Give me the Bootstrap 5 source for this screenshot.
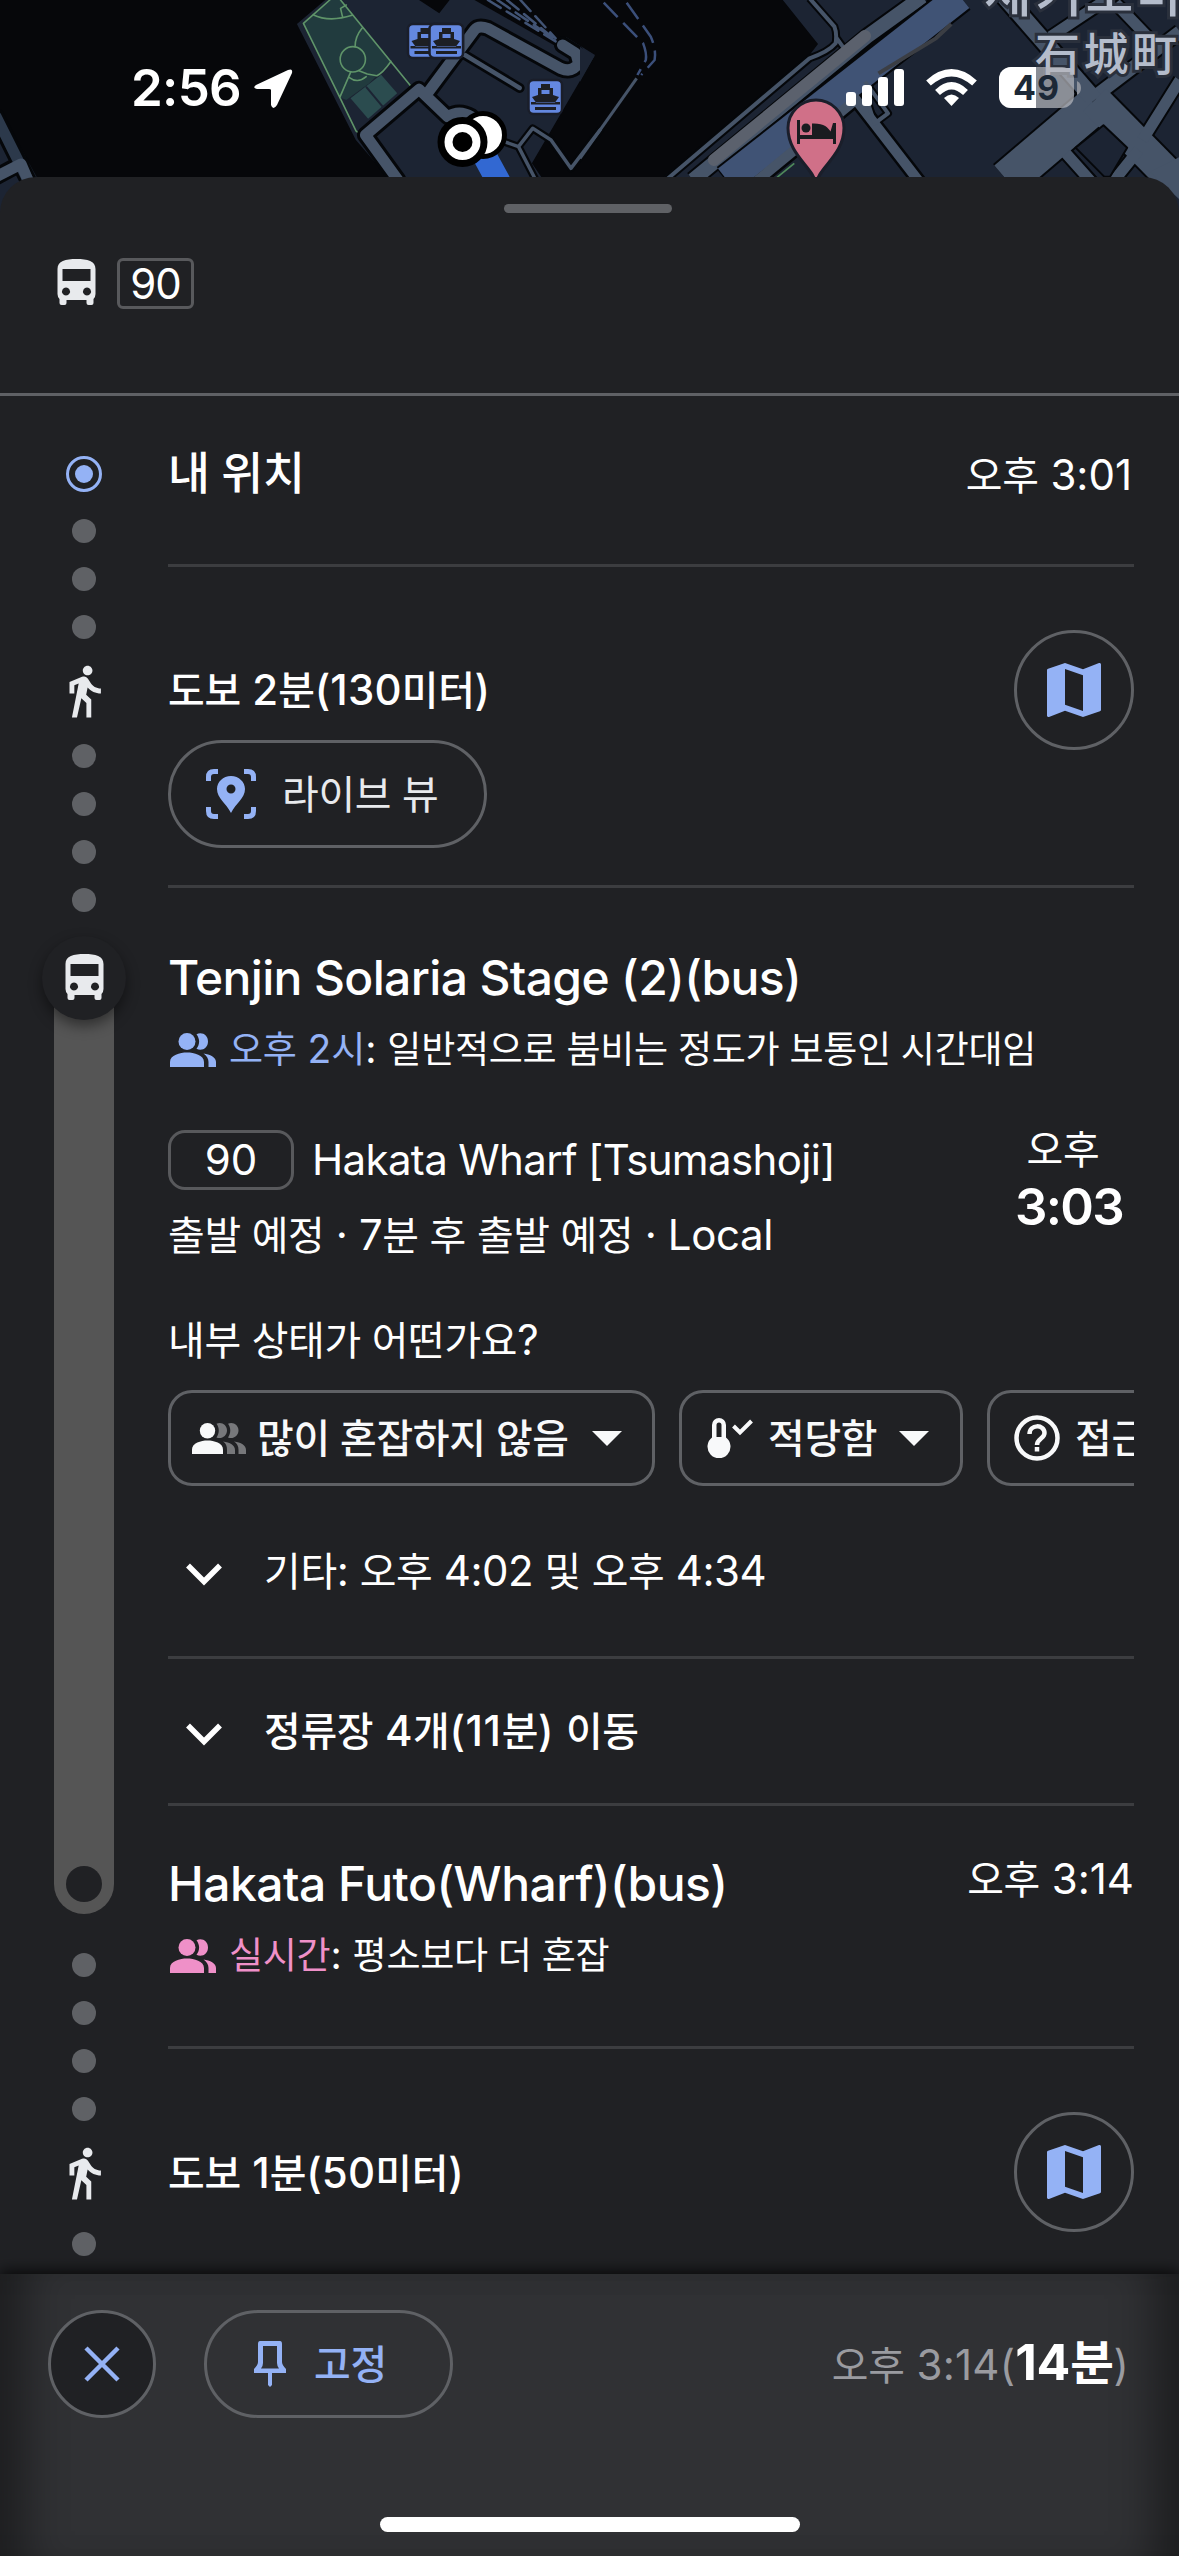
<!DOCTYPE html>
<html lang="ko" data-bs-theme="dark">
<head>
<meta charset="utf-8">
<meta name="viewport" content="width=device-width, initial-scale=1">
<title>경로</title>
<link rel="stylesheet" href="https://cdn.jsdelivr.net/npm/bootstrap@5.3.0/dist/css/bootstrap.min.css">
<style>
  :root { --sheet:#202124; --edge:#5f6165; --hair:#3c3d40; --sky:#94b2f5; --pink:#ef90c8; --soft:#e8eaed; }
  body { width:1179px; height:2556px; overflow:hidden; background:var(--sheet); color:#fff;
         font-family:Inter,"Noto Sans CJK KR",sans-serif; font-size:42px; line-height:60px; }
  svg { display:block; flex:none; }
  .ln { white-space:nowrap; }
  /* Hangul runs are set a little smaller than the Latin beside them */
  .ko { font-size:.95em; letter-spacing:-.008em; }
  .med { font-weight:500; }
  .map-area { height:217px; margin-bottom:-40px; background:#06070a; overflow:hidden; }
  .map-area svg .ns, .map-area svg .ns * { vector-effect:non-scaling-stroke; }
  .clock { font-size:51px; font-weight:600; left:131px; top:58px; letter-spacing:-.7px; }
  .loc-arrow { left:253px; top:68px; }
  .status-icons { left:846px; top:64px; }
  .sheet { background:var(--sheet); border-radius:36px 36px 0 0; }
  .sheet-head { height:219px; border-bottom:3px solid var(--edge); padding:27px 0 0; }
  .handle { width:168px; height:9px; border-radius:5px; background:var(--edge); margin-left:504px; }
  .head-route { padding:45px 0 0 57px; gap:21px; }
  .head-route svg { margin-bottom:4px; }
  .route-box { width:77px; height:51px; border:3px solid #58595c; border-radius:6px; letter-spacing:-.9px; }
  .rail { width:168px; }
  .rail-in { width:84px; margin-left:42px; }
  .dot { width:24px; height:24px; border-radius:50%; background:#5f6165; flex:none; }
  .stop-ring { width:36px; height:36px; border:3px solid var(--sky); border-radius:50%; margin-top:60px; }
  .stop-ring i { width:18px; height:18px; border-radius:50%; background:var(--sky); }
  .dots { gap:24px; }
  .dots-a { margin-top:27px; }
  .dots-b { margin-top:39px; }
  .walk-a { margin:23px 0 24px; }
  .walk-b { margin:23px 0 30px; }
  .bus-disc { width:84px; height:84px; margin-top:24px; padding-bottom:3px; background:var(--sheet); box-shadow:0 6px 14px rgba(0,0,0,.45); z-index:1; }
  .track { width:60px; height:936px; margin-top:-42px; background:#555; border-radius:0 0 30px 30px; padding-bottom:12px; }
  .track i { width:36px; height:36px; border-radius:50%; background:var(--sheet); }
  .leg { border-bottom:3px solid var(--hair); }
  .leg-start { height:171px; padding-top:47px; }
  .leg-walk { height:321px; padding-top:63px; }
  .leg-bus { height:771px; padding-top:60px; }
  .leg-stops { height:147px; padding:1px 0 0 18px; gap:42px; }
  .leg-end { height:243px; padding-top:48px; }
  .leg-last { height:225px; padding:63px 0 42px; }
  .main-col { width:966px; }
  .ttl { font-size:48px; font-weight:500; letter-spacing:-.65px; }
  .crowd { font-size:39px; gap:13px; padding-left:2px; margin-top:11px; }
  .dir { letter-spacing:-.64px; }
  .ring-btn { width:120px; height:120px; border:3px solid var(--edge); }
  .pill { border:3px solid var(--edge); border-radius:54px; height:108px; }
  .live { width:319px; margin-top:19px; padding-left:35px; gap:26px; color:var(--soft); }
  .line-box { width:126px; height:60px; border:3px solid #58595c; border-radius:17px; }
  .when { width:130px; margin-top:-10px; line-height:58px; }
  .when b { font-size:51px; font-weight:600; letter-spacing:-1.7px; margin-top:-1px; }
  .chips { gap:24px; margin-top:19px; }
  .chip { height:96px; border:3px solid var(--edge); border-radius:24px; color:#f8f9fa; font-weight:500; flex:none; }
  .chev { margin-top:5px; }
  .foot { height:282px; background:#303134; padding:36px 50px 0 48px;
          box-shadow:0 -3px 14px rgba(0,0,0,.75), inset 50px 0 40px -24px rgba(0,0,0,.38), inset -50px 0 40px -24px rgba(0,0,0,.38); }
  .close-btn { width:108px; height:108px; border:3px solid var(--edge); background:var(--sheet); }
  .pin { width:249px; margin-left:48px; padding-left:47px; gap:28px; color:var(--sky); font-weight:500; }
  .eta { color:#9a9ba0; letter-spacing:.2px; }
  .eta b { font-size:50px; font-weight:700; color:#fff; letter-spacing:-.2px; }
  .home-bar { width:420px; height:15px; border-radius:8px; background:#fff; margin:99px 0 0 332px; }
</style>
</head>
<body>
<div class="map-area position-relative">
<svg width="1179" height="217" viewBox="0 0 1179 217">
  <!-- harbour side -->
  <g class="ns" transform="scale(.38265 .33333)" stroke-linejoin="round" stroke-linecap="round">
    <path d="M0 330L100 540V700H0Z" fill="#1c2433"/>
    <path d="M-10 350L75 545M-10 530L55 490" stroke="#05070a" stroke-width="17" fill="none"/>
    <path d="M-10 350L75 545" stroke="#2c394b" stroke-width="11" fill="none"/>
    <path d="M-10 530L55 492L75 545" stroke="#465468" stroke-width="11" fill="none"/>
    <path d="M850 0L776 72L930 420L1020 540H1420L1390 490L1555 165L1480 112L1470 150L1240 0H1175L1148 40L1095 0Z" fill="#1c2433"/>
    <path d="M862 0L793 70L888 292L905 300L965 250L1022 184L890 0Z" fill="#213b3e"/>
    <path d="M916 295L996 224L1038 280L962 356Z" fill="#2b4c4f"/>
    <path d="M958 262L1000 320" stroke="#1c2433" stroke-width="2"/>
    <g fill="none" stroke="#5f9469" stroke-width="1.6"><path d="M862 0L793 70L888 292L930 392Q935 400 945 396M890 0L1075 260M818 44Q860 68 920 46M905 15L890 25L895 50M946 85Q928 110 928 140M1022 184Q1000 220 985 227L960 222L938 212M917 215L888 292M912 232Q935 252 957 230"/><ellipse cx="922" cy="178" rx="33" ry="38"/></g>
    <g fill="none" stroke="#05070a">
      <path stroke-width="17" d="M1040 540L955 405L1095 268L1170 350Q1200 328 1232 350M1120 275L1240 90Q1250 75 1275 85L1465 205Q1495 220 1512 190L1505 160L1470 135"/>
      <path stroke-width="10" d="M1215 165L1358 264"/><path stroke-width="8" d="M1280 410L1355 440L1400 540M1355 440L1392 385L1440 420L1492 505L1568 390"/></g>
    <g fill="none" stroke="#465468">
      <path stroke-width="11" d="M1040 540L955 405L1095 268L1170 350Q1200 328 1232 350M1120 275L1240 90Q1250 75 1275 85L1465 205Q1495 220 1512 190L1505 160L1470 135"/>
      <path stroke-width="4.5" d="M1215 165L1358 264"/><path stroke-width="3.5" d="M1280 410L1355 440L1400 540M1355 440L1392 385L1440 420L1492 505L1568 390"/></g>
    <path d="M1275 0L1452 124M1300 0L1440 110M1325 0L1452 120M1360 0L1452 115" stroke="#415374" stroke-width="2.5" stroke-dasharray="15 7" fill="none"/>
    <path d="M1265 465L1310 560" stroke="#3268d2" stroke-width="24"/>
  </g>
  <g id="ferry"><rect x="429.500" y="24" width="33.500" height="34" rx="5" fill="#6488e0" stroke="#1a1e2a" stroke-width="2.500"/><path d="M439 32H442V28H451V32H454V39L460 41L456 46.500H437L433 41L439 39ZM442.500 34V38H450.500V34ZM432 46H461V48.500H432ZM436 51H457V54H436Z" fill="#1d1f24" fill-rule="evenodd"/></g>
  <use href="#ferry" x="-21.500"/><use href="#ferry"/><use href="#ferry" x="99" y="56"/>
  <circle cx="483" cy="135" r="21.500" fill="#fff" stroke="#000" stroke-width="5"/>
  <circle cx="462.500" cy="142" r="21.500" fill="#fff" stroke="#000" stroke-width="7"/><circle cx="462.500" cy="142" r="10"/>
  <!-- town side -->
  <g class="ns" transform="translate(580) scale(.38265 .33333)" stroke-linejoin="round">
    <path d="M530 0L622 132L600 165L210 540V700H1568V0Z" fill="#1c2433"/>
    <path d="M0 475L148 235" stroke="#465468" stroke-width="3" fill="none"/><path d="M0 140L38 168L0 245Z" fill="#1c2433"/>
    <path d="M62 8L165 130Q175 160 172 180L150 225M122 8L185 110Q200 150 195 180L160 225" stroke="#3b4f7a" stroke-width="2.500" stroke-dasharray="20 8" fill="none"/>
    <g fill="none" stroke="#05070a"><path stroke-width="8" d="M600 -5L665 80Q672 100 668 130Q650 155 600 175L225 540M668 110L690 145"/>
      <path stroke-width="18" d="M295 540L750 110L895 -10"/><path stroke-width="34" d="M380 540L990 -10"/>
      <path stroke-width="15" d="M455 550L720 300M715 290L890 550"/><path stroke-width="8" d="M750 300L770 370L805 340L745 245"/>
      <path stroke-width="42" d="M1115 540L1345 315"/><path stroke-width="17" d="M1345 290L1568 95"/>
      <path stroke-width="21" d="M1110 -10L1345 300"/><path stroke-width="36" d="M1345 300L1568 560"/>
      <path stroke-width="15" d="M1270 460L1340 550M1460 450L1390 550M1568 240L1470 420M1400 10L1500 130M1230 110L1400 -20"/></g>
    <g fill="none" stroke="#465468"><path stroke-width="4" d="M600 -5L665 80Q672 100 668 130Q650 155 600 175L225 540M668 110L690 145"/>
      <path stroke-width="14" d="M295 540L750 110L895 -10"/></g>
    <path stroke="#5b616d" stroke-width="12" stroke-linecap="round" d="M350 480L745 108"/>
    <path stroke="#05070a" stroke-width="33" fill="none" d="M384 540L994 -10"/>
    <path stroke="#405375" stroke-width="29" fill="none" d="M384 540L994 -10"/>
    <path d="M970 72L930 115L780 220" stroke="#3b3e44" stroke-width="4" fill="none"/>
    <g fill="none" stroke="#465468"><path stroke-width="10" d="M455 550L720 300M715 290L890 550"/><path stroke-width="4" d="M750 300L770 370L805 340L745 245"/>
      <path stroke-width="38" d="M1115 540L1345 315"/><path stroke-width="13" d="M1345 290L1568 95"/>
      <path stroke-width="17" d="M1110 -10L1345 300"/><path stroke-width="32" d="M1345 300L1568 560"/>
      <path stroke-width="11" d="M1270 460L1340 550M1460 450L1390 550M1568 240L1470 420M1400 10L1500 130M1230 110L1400 -20"/></g>
    <path d="M1295 443L1368 376L1430 443L1385 530H1370Z" fill="#1c2433" stroke="#05070a" stroke-width="2"/>
    <path d="M1568 470L1490 515L1568 600Z" fill="#465468"/>
    <path d="M515 532L560 490" stroke="#4f8a5b" stroke-width="1.800"/>
  </g>
  <path d="M816 184C814 168 788 155 788 128a28 28 0 0 1 56 0C844 155 818 168 816 184Z" fill="#d07088" stroke="#1a1e2a" stroke-width="3"/>
  <path d="M797 120h3v15h12v-11.500c12-.5 16 4 18.500 8l2.500-8.500h3v21h-3v-5h-33v5h-3z" fill="#1a1c20"/><circle cx="806" cy="128" r="4.500" fill="#1a1c20"/>
  <g fill="#b4bccb" stroke="#2a303c" stroke-width="6" paint-order="stroke" font-family="'Noto Sans CJK KR',sans-serif" font-weight="500">
    <text x="984" y="12" font-size="52" textLength="200">세키조마</text>
    <text x="1035" y="71" font-size="45" textLength="142" font-family="'Noto Sans CJK JP',sans-serif">石城町</text></g>
</svg>
<div class="clock position-absolute ln">2:56</div>
<svg class="loc-arrow position-absolute" width="40" height="41" viewBox="0 0 40 41"><path d="M3 17L35 2Q40 0 39 5L24 37Q20 43 18 37V22Q18 21 16 21H4Q-1 20 3 17Z" fill="#fff"/></svg>
<svg class="status-icons position-absolute" width="240" height="48" viewBox="0 0 240 48" fill="#fff">
  <rect y="28" width="10" height="14" rx="3"/><rect x="16" y="21" width="10" height="21" rx="3"/><rect x="32" y="13" width="10" height="29" rx="3"/><rect x="48" y="5" width="10" height="37" rx="3"/>
  <path d="M105.500 42L98 34Q105.500 27 113 34Z"/><path d="M91.500 28.500Q105.500 15 119.500 28.500" fill="none" stroke="#fff" stroke-width="7"/><path d="M82.500 19Q105.500-1.500 128.500 19" fill="none" stroke="#fff" stroke-width="7"/>
  <rect x="153" y="3" width="75" height="41" rx="12" fill="#b5b7bd" fill-opacity=".72"/><path d="M190 3V44H165a12 12 0 0 1-12-12V15a12 12 0 0 1 12-12Z"/><path d="M231 17q4 2 4 7t-4 7z" fill="#8d929c"/>
  <text x="167" y="36" font-size="34" font-weight="700" textLength="46" fill="#1c2836">49</text>
</svg>
</div>

<main class="sheet position-relative">
  <header class="sheet-head">
    <div class="handle"></div>
    <div class="head-route d-flex align-items-center">
      <svg width="39" height="46" viewBox="0 0 38 46"><path id="busp" fill="#e8eaed" fill-rule="evenodd" d="M0 10C0 2 8 0 19 0S38 2 38 10V35Q38 38 36 40V44a2 2 0 0 1-2 2H31a2 2 0 0 1-2-2V41H9V44a2 2 0 0 1-2 2H4a2 2 0 0 1-2-2V40Q0 38 0 35ZM5 10V22H33V10ZM8.500 28.500a4 4 0 1 0 .01 0ZM29.500 28.500a4 4 0 1 0 .01 0Z"/></svg>
      <div class="route-box d-flex align-items-center justify-content-center">90</div>
    </div>
  </header>

  <div class="d-flex">
    <div class="rail"><div class="rail-in d-flex flex-column align-items-center">
      <div class="stop-ring d-flex align-items-center justify-content-center"><i></i></div>
      <div class="dots dots-a d-flex flex-column"><div class="dot"></div><div class="dot"></div><div class="dot"></div></div>
      <svg class="walk-a" width="58" height="58" viewBox="0 0 24 24"><path id="walk" fill="#e8eaed" d="M13.500 5.500c1.100 0 2-.9 2-2s-.9-2-2-2-2 .9-2 2 .9 2 2 2zM9.800 8.900L7 23h2.100l1.800-8 2.100 2v6h2v-7.500l-2.100-2 .6-3C14.800 12 16.800 13 19 13v-2c-1.900 0-3.500-1-4.300-2.400l-1-1.600c-.4-.6-1-1-1.700-1-.3 0-.5.1-.8.1L6 8.300V13h2V9.600l1.800-.7"/></svg>
      <div class="dots d-flex flex-column"><div class="dot"></div><div class="dot"></div><div class="dot"></div><div class="dot"></div></div>
      <div class="bus-disc rounded-circle d-flex align-items-center justify-content-center"><svg width="39" height="46" viewBox="0 0 38 46"><use href="#busp"/></svg></div>
      <div class="track d-flex align-items-end justify-content-center"><i></i></div>
      <div class="dots dots-b d-flex flex-column"><div class="dot"></div><div class="dot"></div><div class="dot"></div><div class="dot"></div></div>
      <svg class="walk-b" width="58" height="58" viewBox="0 0 24 24"><use href="#walk"/></svg>
      <div class="dot"></div>
    </div></div>

    <div class="main-col">
      <section class="leg leg-start d-flex justify-content-between">
        <div class="ttl ln"><span class="ko">내 위치</span></div><div class="ln" style="padding:2px 2px 0 0"><span class="ko">오후</span> 3:01</div>
      </section>
      <section class="leg leg-walk d-flex justify-content-between align-items-start">
        <div style="padding-top:30px">
          <div class="med ln" style="letter-spacing:.2px"><span class="ko">도보</span> 2<span class="ko">분</span>(130<span class="ko">미터</span>)</div>
          <div class="live pill d-flex align-items-center">
            <svg width="50" height="50" viewBox="0 0 50 50" fill="none" stroke="#94b2f5" stroke-width="5"><path d="M2.500 12V8q0-5.500 5.500-5.500H12M38 2.500H42q5.500 0 5.500 5.500V12M47.500 38V42q0 5.500-5.500 5.500H38M12 47.500H8q-5.500 0-5.500-5.500V38"/><path d="M25 7c-8 0-14 6-14 13 0 9 9 14 14 24 5-10 14-15 14-24 0-7-6-13-14-13zm0 8.500a4.500 4.500 0 1 1 0 9 4.500 4.500 0 0 1 0-9z" fill="#94b2f5" fill-rule="evenodd" stroke="none"/></svg>
            <span class="ln"><span class="ko">라이브 뷰</span></span>
          </div>
        </div>
        <div class="ring-btn rounded-circle d-flex align-items-center justify-content-center"><svg width="72" height="72" viewBox="0 0 24 24"><path id="mapi" fill="#94b2f5" d="M20.500 3l-.16.03L15 5.100 9 3 3.360 4.900c-.21.07-.36.25-.36.48V20.500c0 .28.22.5.5.5l.16-.03L9 18.900l6 2.100 5.640-1.900c.21-.07.36-.25.36-.48V3.500c0-.28-.22-.5-.5-.5zM15 19l-6-2.110V5l6 2.110V19z"/></svg></div>
      </section>
      <section class="leg leg-bus">
        <div class="ttl ln">Tenjin Solaria Stage (2)(bus)</div>
        <div class="crowd d-flex align-items-center">
          <svg width="46" height="34" viewBox="0 0 46 34" fill="#94b2f5"><g id="ppl"><circle cx="17" cy="8.500" r="8.500"/><path d="M0 34V29C0 22 10 19.500 17 19.500S34 22 34 29V34ZM26.500 1.200C32-1.500 38 2 38 8.500S32 18.500 26.500 15.800C30 11 30 6 26.500 1.200ZM33.500 20.500C40 21.500 46 24 46 29V34H38.500V29C38.500 25.500 36.500 22.500 33.500 20.500Z"/></g></svg>
          <span class="ln"><span style="color:var(--sky)"><span class="ko">오후</span> 2<span class="ko">시</span></span>: <span class="ko">일반적으로 붐비는 정도가 보통인 시간대임</span></span>
        </div>
        <div class="d-flex justify-content-between" style="margin-top:50px">
          <div>
            <div class="d-flex align-items-center" style="gap:18px"><div class="line-box d-flex align-items-center justify-content-center">90</div><span class="dir ln">Hakata Wharf [Tsumashoji]</span></div>
            <div class="ln" style="margin-top:15px;letter-spacing:-.4px"><span class="ko">출발 예정</span> · 7<span class="ko">분 후 출발 예정</span> · Local</div>
          </div>
          <div class="when d-flex flex-column align-items-center"><span class="ln" style="margin-right:12px"><span class="ko">오후</span></span><b class="ln">3:03</b></div>
        </div>
        <div class="ln" style="margin-top:44px"><span class="ko">내부 상태가 어떤가요</span>?</div>
        <div class="chips d-flex overflow-hidden">
          <div class="chip d-flex align-items-center" style="width:487px;padding-left:21px;gap:11px">
            <svg width="54" height="31" viewBox="0 0 54 31"><g fill="#77787b"><path d="M36 .8C41-1.500 46.500 2 46.500 7.500S41 16.500 36 14.500C39 10 39 5 36 .8ZM42 18.500C49 19.500 54 22 54 27V31H46.500V27C46.500 23 45 20.500 42 18.500Z"/><path d="M24.500 .8C29.500-1.500 35 2 35 7.500S29.500 16.500 24.500 14.500C27.500 10 27.500 5 24.500 .8ZM31 18.500C38 19.500 43 22 43 27V31H35V27C35 23 34 20.500 31 18.500Z"/></g><g fill="#f8f9fa"><circle cx="15.500" cy="7.700" r="7.700"/><path d="M0 31V26.500C0 20 9 17.500 15.500 17.500S31 20 31 26.500V31Z"/></g></svg>
            <span class="ln"><span class="ko">많이 혼잡하지 않음</span></span><svg style="margin-left:12px" width="30" height="15" viewBox="0 0 30 15"><path d="M0 0H30L15 15Z" fill="#f8f9fa"/></svg>
          </div>
          <div class="chip d-flex align-items-center" style="width:284px;padding-left:25px;gap:15px">
            <svg width="46" height="41" viewBox="0 0 46 41"><path fill="#f8f9fa" fill-rule="evenodd" d="M5 7a7 7 0 0 1 14 0V19.500A11.500 11.500 0 1 1 5 19.500ZM9.500 7V19H14.500V7a2.500 2.500 0 0 0-5 0Z"/><path d="M26.500 8L33 14.500L44.500 3" fill="none" stroke="#f8f9fa" stroke-width="4"/></svg>
            <span class="ln"><span class="ko">적당함</span></span><svg style="margin-left:7px" width="30" height="15" viewBox="0 0 30 15"><path d="M0 0H30L15 15Z" fill="#f8f9fa"/></svg>
          </div>
          <div class="chip d-flex align-items-center" style="width:300px;padding-left:24px;gap:15px">
            <svg width="46" height="46" viewBox="0 0 46 46" fill="none" stroke="#f8f9fa" stroke-width="4.500"><circle cx="23" cy="23" r="20.500"/><path d="M15.500 19C15.500 9 30.500 9 30.500 18C30.500 23.500 23 23.500 23 30"/><path d="M23 32V36.500"/></svg>
            <span class="ln"><span class="ko">접근성</span></span>
          </div>
        </div>
        <div class="d-flex align-items-center" style="margin-top:55px;padding-left:18px;gap:42px"><svg class="chev" width="36" height="23" viewBox="0 0 36 23"><path id="chev" d="M2 2.500L18 18.500L34 2.500" fill="none" stroke="#fff" stroke-width="5.500"/></svg><span class="ln" style="letter-spacing:-.5px"><span class="ko">기타</span>: <span class="ko">오후</span> 4:02 <span class="ko">및 오후</span> 4:34</span></div>
      </section>
      <section class="leg leg-stops d-flex align-items-center"><svg class="chev" width="36" height="23" viewBox="0 0 36 23"><use href="#chev"/></svg><span class="med ln" style="letter-spacing:.6px"><span class="ko">정류장</span> 4<span class="ko">개</span>(11<span class="ko">분</span>) <span class="ko">이동</span></span></section>
      <section class="leg leg-end">
        <div class="d-flex justify-content-between"><span class="ttl ln" style="letter-spacing:-.52px">Hakata Futo(Wharf)(bus)</span><span class="ln" style="margin-top:-5px"><span class="ko">오후</span> 3:14</span></div>
        <div class="crowd d-flex align-items-center"><svg width="46" height="34" viewBox="0 0 46 34" fill="#ef90c8"><use href="#ppl"/></svg><span class="ln"><span class="ko" style="color:var(--pink)">실시간</span>: <span class="ko">평소보다 더 혼잡</span></span></div>
      </section>
      <section class="leg-last d-flex justify-content-between align-items-center">
        <span class="med ln" style="padding-top:2px;letter-spacing:.2px"><span class="ko">도보</span> 1<span class="ko">분</span>(50<span class="ko">미터</span>)</span>
        <div class="ring-btn rounded-circle d-flex align-items-center justify-content-center"><svg width="72" height="72" viewBox="0 0 24 24"><use href="#mapi"/></svg></div>
      </section>
    </div>
  </div>
</main>

<footer class="foot position-relative">
  <div class="d-flex align-items-center">
    <div class="close-btn rounded-circle d-flex align-items-center justify-content-center"><svg width="36" height="36" viewBox="0 0 36 36"><path d="M2 2L34 34M34 2L2 34" stroke="#94b2f5" stroke-width="4.500"/></svg></div>
    <div class="pin pill d-flex align-items-center">
      <svg width="32" height="46" viewBox="0 0 32 46"><path d="M6 0H26Q28 0 28 3V21Q28 24 32 28V32H18V44L16 46L14 44V32H0V28Q4 24 4 21V3Q4 0 6 0ZM9 5V22Q9 25 7 27.500H25Q23 25 23 22V5Z" fill="#94b2f5" fill-rule="evenodd"/></svg>
      <span class="ln"><span class="ko">고정</span></span></div>
    <div class="eta ms-auto ln"><span class="ko">오후</span> 3:14(<b>14<span class="ko">분</span></b>)</div>
  </div>
  <div class="home-bar"></div>
</footer>
<script src="https://cdn.jsdelivr.net/npm/bootstrap@5.3.0/dist/js/bootstrap.bundle.min.js"></script>
</body>
</html>
